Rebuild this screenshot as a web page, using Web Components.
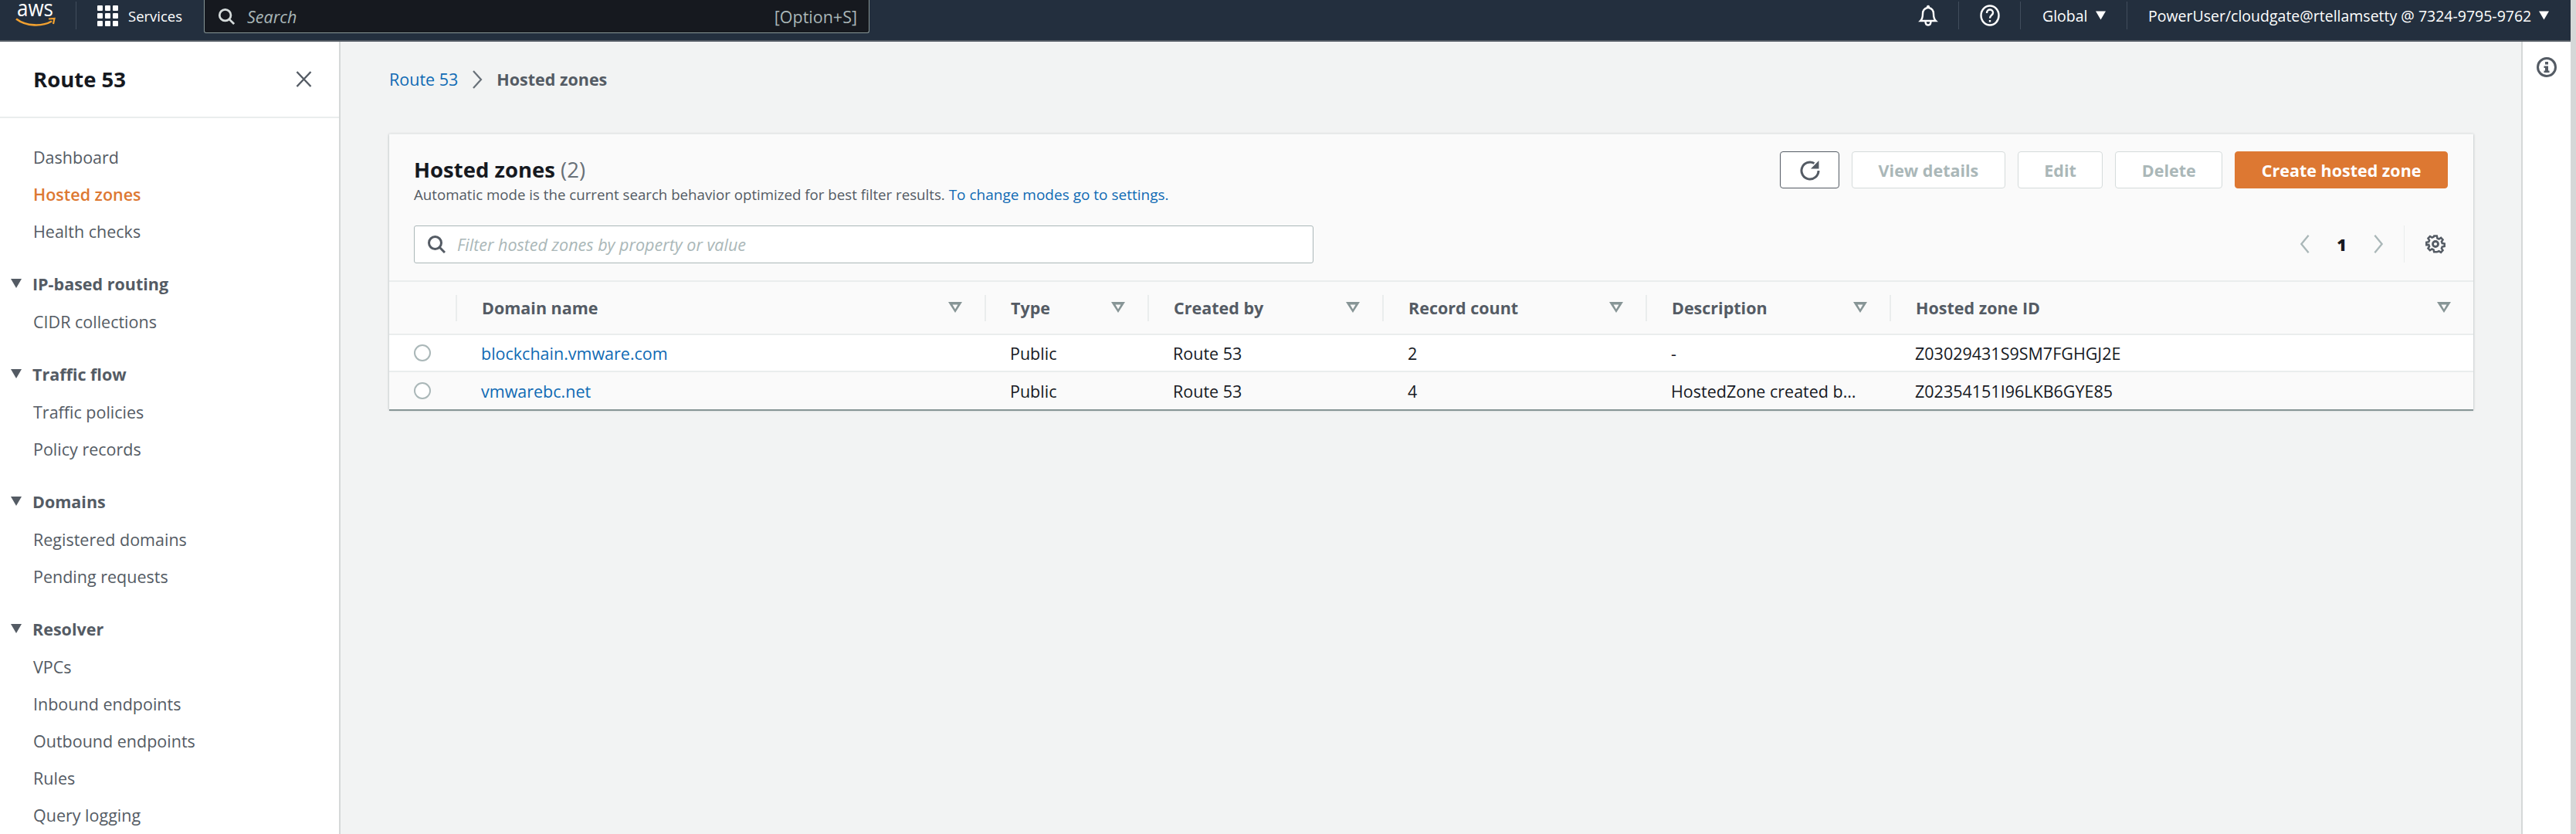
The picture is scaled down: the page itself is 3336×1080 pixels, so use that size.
<!DOCTYPE html>
<html>
<head>
<meta charset="utf-8">
<title>Route 53 - Hosted zones</title>
<style>
  html, body { margin: 0; height: 100%; overflow: hidden; }
  body {
    width: 3336px; height: 1080px;
    display: flex; flex-direction: column;
    background: #d5d8d8;
    font-family: "Open Sans", "Noto Sans", sans-serif;
    font-size: 21.5px;
    color: #16191f;
  }
  #app { width: 3329px; height: 1080px; display: flex; flex-direction: column; }
  #main { flex: 1; display: flex; min-height: 0; }
</style>
</head>
<body>
<div id="app">
  <aws-topbar></aws-topbar>
  <div id="main">
    <aws-sidenav title="Route 53">
      <nav-item>Dashboard</nav-item>
      <nav-item active>Hosted zones</nav-item>
      <nav-item>Health checks</nav-item>
      <nav-group label="IP-based routing">
        <nav-item>CIDR collections</nav-item>
      </nav-group>
      <nav-group label="Traffic flow">
        <nav-item>Traffic policies</nav-item>
        <nav-item>Policy records</nav-item>
      </nav-group>
      <nav-group label="Domains">
        <nav-item>Registered domains</nav-item>
        <nav-item>Pending requests</nav-item>
      </nav-group>
      <nav-group label="Resolver">
        <nav-item>VPCs</nav-item>
        <nav-item>Inbound endpoints</nav-item>
        <nav-item>Outbound endpoints</nav-item>
        <nav-item>Rules</nav-item>
        <nav-item>Query logging</nav-item>
      </nav-group>
    </aws-sidenav>
    <zones-page></zones-page>
    <info-rail></info-rail>
  </div>
</div>

<script>
const ICON = {
  search: `<svg viewBox="0 0 24 24" fill="none" stroke="currentColor" stroke-width="3"><circle cx="10.5" cy="10.5" r="8"/><path d="M16.5 16.5 23 23"/></svg>`,
  caret: `<svg viewBox="0 0 14 12"><path d="M0 0h14L7 12z" fill="currentColor"/></svg>`,
  filter: `<svg viewBox="0 0 18 14"><path d="M0 0h18L9 14z M5.500 3.500 9 9.500l3.500-6z" fill="currentColor" fill-rule="evenodd"/></svg>`,
  chevL: `<svg viewBox="0 0 14 28" fill="none" stroke="currentColor" stroke-width="2.500"><path d="M12 2 2 14l10 12"/></svg>`,
  chevR: `<svg viewBox="0 0 14 28" fill="none" stroke="currentColor" stroke-width="2.500"><path d="M2 2l10 12L2 26"/></svg>`,
};

class AwsTopbar extends HTMLElement {
  constructor() {
    super();
    this.attachShadow({ mode: 'open' });
    const cells = [];
    for (let i = 0; i < 9; i++) cells.push('<i></i>');
    this.shadowRoot.innerHTML = `
      <style>
        :host {
          display: flex; flex: none; height: 52px; align-items: stretch;
          background: #232f3e; color: #fff;
          border-bottom: 2px solid; border-image: linear-gradient(#e8e9ea 50%, #545b64 50%) 1;
          font-size: 18.500px;
        }
        .logo { width: 98px; flex: none; }
        .logo svg { display: block; width: 98px; height: 52px; }
        .logo text { font-family: "Open Sans", sans-serif; font-size: 30px; fill: #fff; }
        .sep { width: 1px; background: #414d5c; margin: 2px 0 14px; flex: none; }
        .services { display: flex; align-items: center; gap: 13px; width: 165px; padding-left: 27px; box-sizing: border-box; flex: none; margin-bottom: 12px; }
        .grid { display: grid; grid-template-columns: repeat(3, 7px); grid-auto-rows: 7px; gap: 3px; }
        .grid i { background: #fff; border-radius: 1px; }
        .search {
          width: 862px; height: 43px; flex: none; box-sizing: border-box;
          background: #16191f; border: 1px solid #879596; border-top: 0; border-radius: 0 0 3px 3px;
          display: flex; align-items: center; padding: 0 15px 0 17px; color: #aab7b8; font-size: 21.500px;
        }
        .search svg { width: 22px; height: 24px; margin-right: 16px; color: #d5dbdb; }
        .search em { flex: 1; }
        .right { margin-left: auto; display: flex; align-items: stretch; font-size: 19.500px; }
        .btn { display: flex; align-items: center; justify-content: center; margin-bottom: 12px; }
        .btn svg.ic { width: 26px; height: 28px; }
        .caret { display: flex; width: 13px; height: 12px; margin-left: 10px; }
      </style>
      <div class="logo">
        <svg viewBox="0 0 98 52" fill="none">
          <text x="22" y="21" textLength="47" lengthAdjust="spacingAndGlyphs">aws</text>
          <path d="M21 24.500c13 10 34 10 46 3" stroke="#f0a030" stroke-width="2.600"/><path d="M63 24.500 70.500 24 69 31" stroke="#f0a030" stroke-width="2.200"/>
        </svg>
      </div>
      <div class="sep"></div>
      <div class="services"><div class="grid">${cells.join('')}</div><span>Services</span></div>
      <div class="search">${ICON.search}<em>Search</em><span>[Option+S]</span></div>
      <div class="right">
        <div class="btn" style="width:78px">
          <svg class="ic" viewBox="0 0 26 28" fill="none" stroke="#fff" stroke-width="2.400"><path d="M13 2c-1 0-1 1-1 2-4 1-6 4-6 8 0 5-1 7-3 9h20c-2-2-3-4-3-9 0-4-2-7-6-8 0-1 0-2-1-2z"/><path d="M9.500 21.500c0 3 1.500 5 3.500 5s3.500-2 3.500-5"/></svg>
        </div>
        <div class="sep"></div>
        <div class="btn" style="width:79px">
          <svg class="ic" viewBox="0 0 26 28" fill="none" stroke="#fff" stroke-width="2.400"><ellipse cx="13" cy="14" rx="11.500" ry="12.500"/><path d="M9 11c0-3 2-4.500 4-4.500s4 1.500 4 4c0 3-4 3.500-4 7"/><path d="M13 20v2.500"/></svg>
        </div>
        <div class="sep"></div>
        <div class="btn" style="width:137px;justify-content:flex-start;padding-left:28px;box-sizing:border-box"><span>Global</span><span class="caret">${ICON.caret}</span></div>
        <div class="sep"></div>
        <div class="btn" style="width:574px;justify-content:flex-start;padding-left:27px;box-sizing:border-box"><span>PowerUser/cloudgate@rtellamsetty @ 7324-9795-9762</span><span class="caret">${ICON.caret}</span></div>
      </div>`;
  }
}
customElements.define('aws-topbar', AwsTopbar);

class AwsSidenav extends HTMLElement {
  constructor() {
    super();
    this.attachShadow({ mode: 'open' });
    this.shadowRoot.innerHTML = `
      <style>
        :host {
          display: block; flex: none; width: 441px; box-sizing: border-box;
          background: #fff; border-right: 2px solid #d5d8d8; overflow: hidden;
        }
        header {
          height: 99px; box-sizing: border-box; border-bottom: 2px solid #eaeded;
          display: flex; align-items: center; justify-content: space-between; padding: 0 35px 0 43px;
          font-size: 27.500px; font-weight: 700;
        }
        header svg { width: 21px; height: 21px; color: #545b64; }
        .list { padding-top: 26px; }
      </style>
      <header><span id="t"></span><svg viewBox="0 0 21 21" fill="none" stroke="currentColor" stroke-width="2.400"><path d="M1.500 1 19.500 20M19.500 1 1.500 20"/></svg></header>
      <div class="list"><slot></slot></div>`;
    this.shadowRoot.getElementById('t').textContent = this.getAttribute('title');
  }
}
customElements.define('aws-sidenav', AwsSidenav);

class NavItem extends HTMLElement {
  constructor() {
    super();
    this.attachShadow({ mode: 'open' });
    this.shadowRoot.innerHTML = `
      <style>
        :host { display: flex; align-items: center; height: 48px; padding-left: 43px; color: #545b64; }
        :host([active]) { color: #dd7832; font-weight: 600; }
      </style><slot></slot>`;
  }
}
customElements.define('nav-item', NavItem);

class NavGroup extends HTMLElement {
  constructor() {
    super();
    this.attachShadow({ mode: 'open' });
    this.shadowRoot.innerHTML = `
      <style>
        :host { display: block; margin-top: 20px; }
        .h { display: flex; align-items: center; height: 48px; color: #545b64; font-weight: 700; margin-bottom: 1px; }
        .h span.c { width: 16px; height: 12px; margin: 0 13px; flex: none; }
        svg { display: block; width: 100%; height: 100%; }
      </style>
      <div class="h"><span class="c">${ICON.caret}</span><span id="l"></span></div>
      <slot></slot>`;
    this.shadowRoot.getElementById('l').textContent = this.getAttribute('label');
  }
}
customElements.define('nav-group', NavGroup);

class AwsButton extends HTMLElement {
  constructor() {
    super();
    this.attachShadow({ mode: 'open' });
    this.shadowRoot.innerHTML = `
      <style>
        :host {
          display: flex; align-items: center; justify-content: center; box-sizing: border-box; height: 48px;
          border: 1.500px solid #d5dbdb; border-radius: 4px; background: #fff; color: #aab7b8; font-weight: 700; padding: 0 33.500px;
        }
        :host([kind=icon]) { border-color: #545b64; color: #545b64; width: 77px; padding: 0; }
        :host([kind=primary]) { background: #dd7832; border-color: #dd7832; color: #fff; }
      </style><slot></slot>`;
  }
}
customElements.define('aws-button', AwsButton);

class ZoneRow extends HTMLElement {
  constructor() {
    super();
    this.attachShadow({ mode: 'open' });
    const d = JSON.parse(this.getAttribute('data'));
    this.shadowRoot.innerHTML = `
      <style>
        :host {
          display: grid; grid-template-columns: var(--cols); height: 48px; box-sizing: border-box;
          align-items: center; border-bottom: 2px solid #eaeded; background: #fff;
        }
        :host([alt]) { background: #fafafa; border-bottom: 0; }
        .c { padding-left: 33px; white-space: nowrap; overflow: hidden; }
        .r { width: 22px; height: 22px; box-sizing: border-box; border: 2px solid #aab7b8; border-radius: 50%; background: #fff; margin-left: 32px; margin-bottom: 1px; }
        a { color: #0f6ab4; text-decoration: none; }
      </style>
      <div><div class="r"></div></div>
      <div class="c"><a href="#">${d[0]}</a></div>
      ${d.slice(1).map(t => `<div class="c">${t}</div>`).join('')}`;
  }
}
customElements.define('zone-row', ZoneRow);

class ColHead extends HTMLElement {
  constructor() {
    super();
    this.attachShadow({ mode: 'open' });
    this.shadowRoot.innerHTML = `
      <style>
        :host {
          display: flex; align-items: center; justify-content: space-between; height: 34px;
          border-left: 2px solid #eaeded; box-sizing: border-box; padding: 0 29px 0 32px;
          color: #545b64; font-weight: 700;
        }
        svg { width: 18px; height: 14px; color: #879596; display: block; margin-bottom: 1px; }
      </style><slot></slot>${ICON.filter}`;
  }
}
customElements.define('col-head', ColHead);

class ZonesPage extends HTMLElement {
  constructor() {
    super();
    this.attachShadow({ mode: 'open' });
    this.shadowRoot.innerHTML = `
      <style>
        :host { display: block; flex: 1; min-width: 0; background: #f2f3f3; padding: 0 62px 0 63px; box-sizing: border-box; }
        .crumbs { height: 97px; margin-bottom: 22px; display: flex; align-items: center; gap: 17px; color: #545b64; font-weight: 700; }
        .crumbs a { color: #0f6ab4; text-decoration: none; font-weight: 400; }
        .crumbs svg { width: 16px; height: 24px; color: #687078; }
        .card {
          background: #fafafa; border-top: 1px solid #eaeded; box-shadow: 0 2px 0 #879596, 0 1px 3px rgba(0,28,36,.3);
          --cols: 86px 685px 211px 304px 341px 316px 1fr;
        }
        .top { display: flex; justify-content: space-between; padding: 22px 33px 0 32px; height: 98px; box-sizing: border-box; }
        h1 { margin: 0; font-size: 27.500px; font-weight: 700; line-height: 36px; margin-top: 6px; }
        h1 span { font-weight: 400; color: #687078; }
        p { margin: 0; margin-top: 2px; font-size: 18.700px; color: #545b64; line-height: 24px; }
        p a { color: #0f6ab4; text-decoration: none; font-size: 19px; }
        .actions { display: flex; gap: 16px; }
        .actions svg { width: 28px; height: 28px; }
        .filter { display: flex; align-items: center; justify-content: space-between; height: 93px; padding: 0 33px 3px 32px; box-sizing: border-box; border-bottom: 2px solid #eaeded; }
        .input {
          width: 1165px; height: 49px; box-sizing: border-box; border: 1.500px solid #aab7b8; border-radius: 3px; background: #fff;
          display: flex; align-items: center; padding-left: 16px; color: #aab7b8; font-style: italic;
        }
        .input svg { width: 24px; height: 24px; color: #545b64; margin-right: 15px; }
        .pager { display: flex; align-items: center; font-style: normal; font-weight: 700; }
        .pager svg { width: 14px; height: 26px; color: #aab7b8; display: block; }
        .pager b { width: 81px; text-align: center; }
        .gear { display: flex; align-items: center; margin-left: 26px; padding-left: 27px; height: 48px; border-left: 1px solid #eaeded; padding-right: 3px; }
        .gear svg { width: 26px; height: 26px; color: #545b64; }
        .head { display: grid; grid-template-columns: var(--cols); height: 67px; align-items: center; border-bottom: 2px solid #eaeded; box-sizing: content-box; }
        .head .blank { height: 34px; }
      </style>
      <div class="crumbs"><a href="#">Route 53</a><svg viewBox="0 0 16 24" fill="none" stroke="currentColor" stroke-width="2.200"><path d="M3 1l10 11L3 23"/></svg><span>Hosted zones</span></div>
      <div class="card">
        <div class="top">
          <div>
            <h1>Hosted zones <span>(2)</span></h1>
            <p>Automatic mode is the current search behavior optimized for best filter results. <a href="#">To change modes go to settings.</a></p>
          </div>
          <div class="actions">
            <aws-button kind="icon"><svg viewBox="0 0 28 28" fill="none" stroke="currentColor" stroke-width="3"><path d="M25 15a11 11 0 1 1-5.500-9.500"/><path d="M25.500 2v10.500H15z" fill="currentColor" stroke="none"/></svg></aws-button>
            <aws-button>View details</aws-button>
            <aws-button>Edit</aws-button>
            <aws-button>Delete</aws-button>
            <aws-button kind="primary">Create hosted zone</aws-button>
          </div>
        </div>
        <div class="filter">
          <div class="input">${ICON.search}<span>Filter hosted zones by property or value</span></div>
          <div class="pager">
            <span>${ICON.chevL}</span><b>1</b><span>${ICON.chevR}</span>
            <span class="gear"><svg viewBox="0 0 26 26" fill="none" stroke="currentColor" stroke-width="2.800"><circle cx="13" cy="13" r="3.500"/><path d="M11 2h4l.7 3.300 2.300 1 2.900-1.800 2.700 2.900-1.800 2.800.9 2.300 3.300.6v3.800l-3.300.7-.9 2.300 1.800 2.800-2.700 2.900-2.900-1.800-2.300 1L15 25h-4l-.7-3.200-2.300-1-2.900 1.800-2.700-2.900 1.800-2.800-.9-2.300L0 14.900v-3.800l3.300-.6.900-2.300-1.800-2.800 2.700-2.900 2.900 1.800 2.300-1z" transform="translate(1.300 .8) scale(.9)"/></svg></span>
          </div>
        </div>
        <div class="head">
          <div class="blank"></div>
          <col-head>Domain name</col-head>
          <col-head>Type</col-head>
          <col-head>Created by</col-head>
          <col-head>Record count</col-head>
          <col-head>Description</col-head>
          <col-head>Hosted zone ID</col-head>
        </div>
        <zone-row data='["blockchain.vmware.com","Public","Route 53","2","-","Z03029431S9SM7FGHGJ2E"]'></zone-row>
        <zone-row alt data='["vmwarebc.net","Public","Route 53","4","HostedZone created b…","Z02354151I96LKB6GYE85"]'></zone-row>
      </div>`;
  }
}
customElements.define('zones-page', ZonesPage);

class InfoRail extends HTMLElement {
  constructor() {
    super();
    this.attachShadow({ mode: 'open' });
    this.shadowRoot.innerHTML = `
      <style>
        :host { display: flex; justify-content: center; flex: none; width: 64px; background: #fff; border-left: 2px solid #d5d8d8; box-sizing: border-box; padding-top: 20px; }
        svg { width: 26px; height: 26px; }
      </style>
      <svg viewBox="0 0 26 26"><circle cx="13" cy="13" r="11.500" fill="none" stroke="#545b64" stroke-width="3"/><path d="M11 6h4v3.500h-4zM9.500 11.500H15v6h1.500V20h-7v-2.500H11v-3.500H9.500z" fill="#545b64"/></svg>`;
  }
}
customElements.define('info-rail', InfoRail);
</script>
</body>
</html>
